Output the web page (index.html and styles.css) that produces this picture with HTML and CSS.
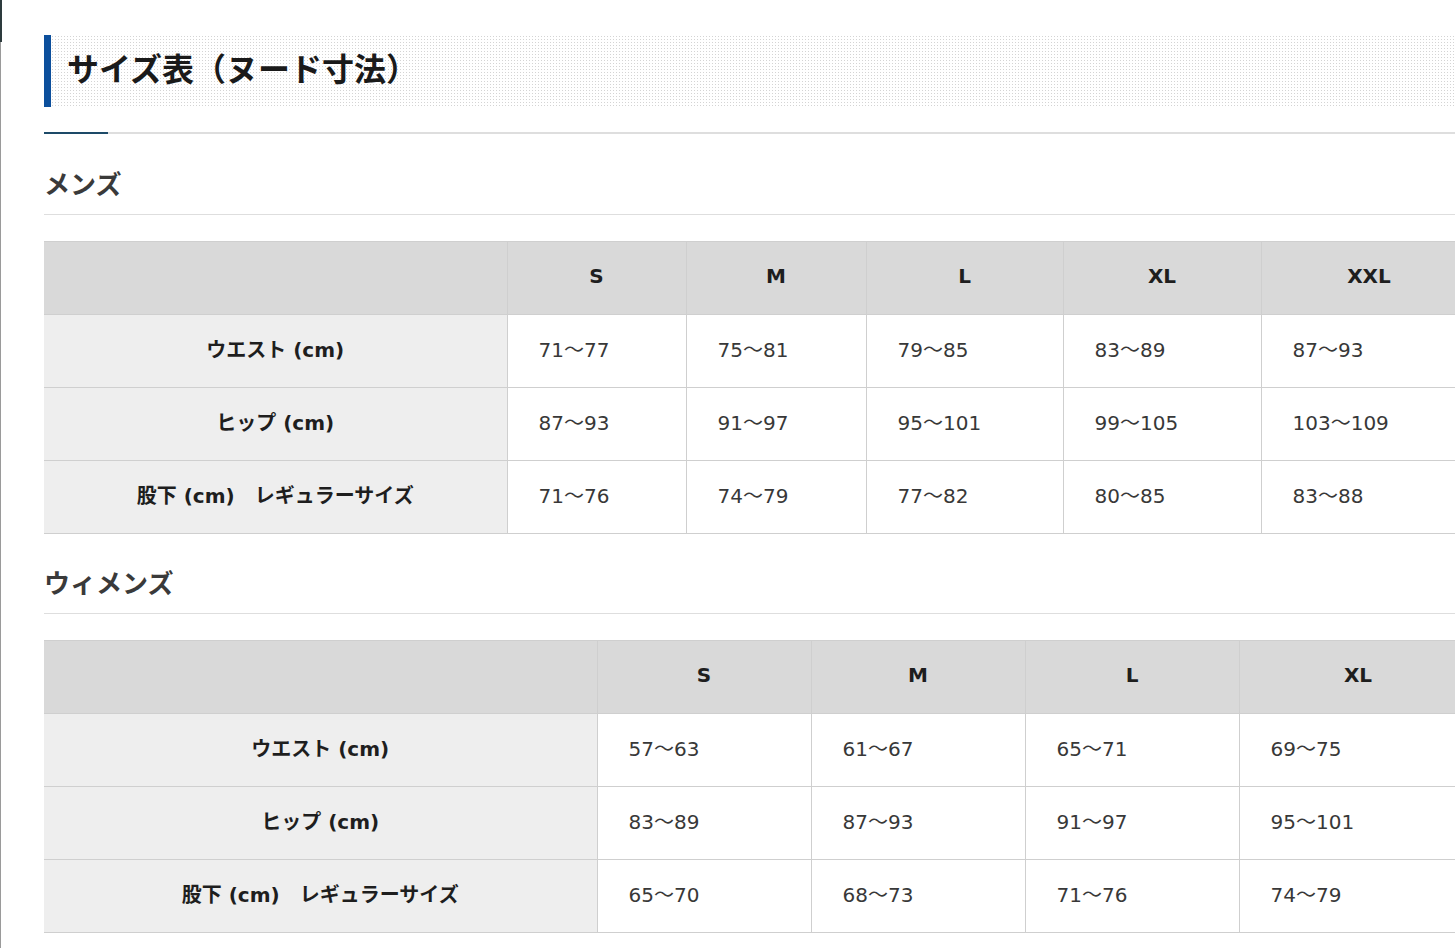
FILE: index.html
```html
<!DOCTYPE html>
<html lang="ja">
<head>
<meta charset="utf-8">
<title>サイズ表（ヌード寸法）</title>
<link rel="stylesheet" href="styles.css">
</head>
<body>
<div class="frame">
  <div class="content">
    <h2 class="page-title">サイズ表（ヌード寸法）</h2>
    <div class="title-rule"></div>

    <h3 class="section-title">メンズ</h3>
    <table class="size-table mens">
      <colgroup>
        <col class="c-label"><col class="c1"><col class="c2"><col class="c3"><col class="c4"><col class="c5">
      </colgroup>
      <thead>
        <tr><th class="corner"></th><th>S</th><th>M</th><th>L</th><th>XL</th><th>XXL</th></tr>
      </thead>
      <tbody>
        <tr><th class="label">ウエスト (cm)</th><td>71～77</td><td>75～81</td><td>79～85</td><td>83～89</td><td>87～93</td></tr>
        <tr><th class="label">ヒップ (cm)</th><td>87～93</td><td>91～97</td><td>95～101</td><td>99～105</td><td>103～109</td></tr>
        <tr><th class="label">股下 (cm)　レギュラーサイズ</th><td>71～76</td><td>74～79</td><td>77～82</td><td>80～85</td><td>83～88</td></tr>
      </tbody>
    </table>

    <h3 class="section-title">ウィメンズ</h3>
    <table class="size-table womens">
      <colgroup>
        <col class="c-label"><col class="c1"><col class="c2"><col class="c3"><col class="c4">
      </colgroup>
      <thead>
        <tr><th class="corner"></th><th>S</th><th>M</th><th>L</th><th>XL</th></tr>
      </thead>
      <tbody>
        <tr><th class="label">ウエスト (cm)</th><td>57～63</td><td>61～67</td><td>65～71</td><td>69～75</td></tr>
        <tr><th class="label">ヒップ (cm)</th><td>83～89</td><td>87～93</td><td>91～97</td><td>95～101</td></tr>
        <tr><th class="label">股下 (cm)　レギュラーサイズ</th><td>65～70</td><td>68～73</td><td>71～76</td><td>74～79</td></tr>
      </tbody>
    </table>
  </div>
</div>
</body>
</html>
```

FILE: styles.css
```css
html {
  overflow: hidden;
}

body {
  margin: 0;
  background: #fff;
  font-family: "DejaVu Sans", "Noto Sans CJK JP", sans-serif;
  color: #333;
}

.frame {
  min-height: 948px;
  background:
    linear-gradient(#2d3b3d, #2d3b3d) 0 0 / 2px 42px no-repeat,
    linear-gradient(#9a9a9a, #9a9a9a) 0 0 / 1px 100% no-repeat,
    #fff;
}

.content {
  width: 1433px;
  padding: 35px 0 40px 44px;
}

.page-title {
  margin: 0;
  height: 72px;
  display: flex;
  align-items: center;
  box-sizing: border-box;
  border-left: 7px solid #0c4f9c;
  padding-left: 16px;
  padding-bottom: 8px;
  font-family: "Noto Sans CJK JP", sans-serif;
  font-size: 32px;
  font-weight: 700;
  color: #1a1a1a;
  text-spacing-trim: space-all;
  background-color: #fff;
  background-image: radial-gradient(circle, #d4d4d4 0.75px, transparent 0.95px);
  background-size: 3px 3px;
}

.title-rule {
  margin-top: 25px;
  height: 2px;
  background: linear-gradient(to right, #1d4a68 64px, #dedede 64px);
}

.section-title {
  margin: 31px 0 0;
  font-family: "Noto Sans CJK JP", sans-serif;
  font-size: 26px;
  font-weight: 700;
  line-height: 36px;
  color: #3a3a3a;
  padding-bottom: 13px;
  border-bottom: 1px solid #dedede;
}

.size-table + .section-title {
  margin-top: 30px;
}

.size-table {
  margin-top: 26px;
  width: 1433px;
  table-layout: fixed;
  border-collapse: collapse;
  font-size: 20px;
}

.size-table th,
.size-table td {
  height: 73px;
  padding: 0 0 5px;
  border: 1px solid #cfcfcf;
  box-sizing: border-box;
}

.size-table tr > :first-child {
  border-left: none;
}

.size-table thead th {
  background: #d9d9d9;
  color: #1e1e1e;
  font-weight: 700;
  text-align: center;
}

.size-table th.label {
  background: #eeeeee;
  color: #1e1e1e;
  font-weight: 700;
  text-align: center;
}

.size-table td {
  background: #fff;
  color: #383838;
  text-align: left;
  padding-left: 31px;
}

.mens .c-label { width: 463px; }
.mens .c1 { width: 179px; }
.mens .c2 { width: 180px; }
.mens .c3 { width: 197px; }
.mens .c4 { width: 198px; }
.mens .c5 { width: 216px; }

.womens .c-label { width: 553px; }
.womens .c1 { width: 214px; }
.womens .c2 { width: 214px; }
.womens .c3 { width: 214px; }
.womens .c4 { width: 238px; }
```
